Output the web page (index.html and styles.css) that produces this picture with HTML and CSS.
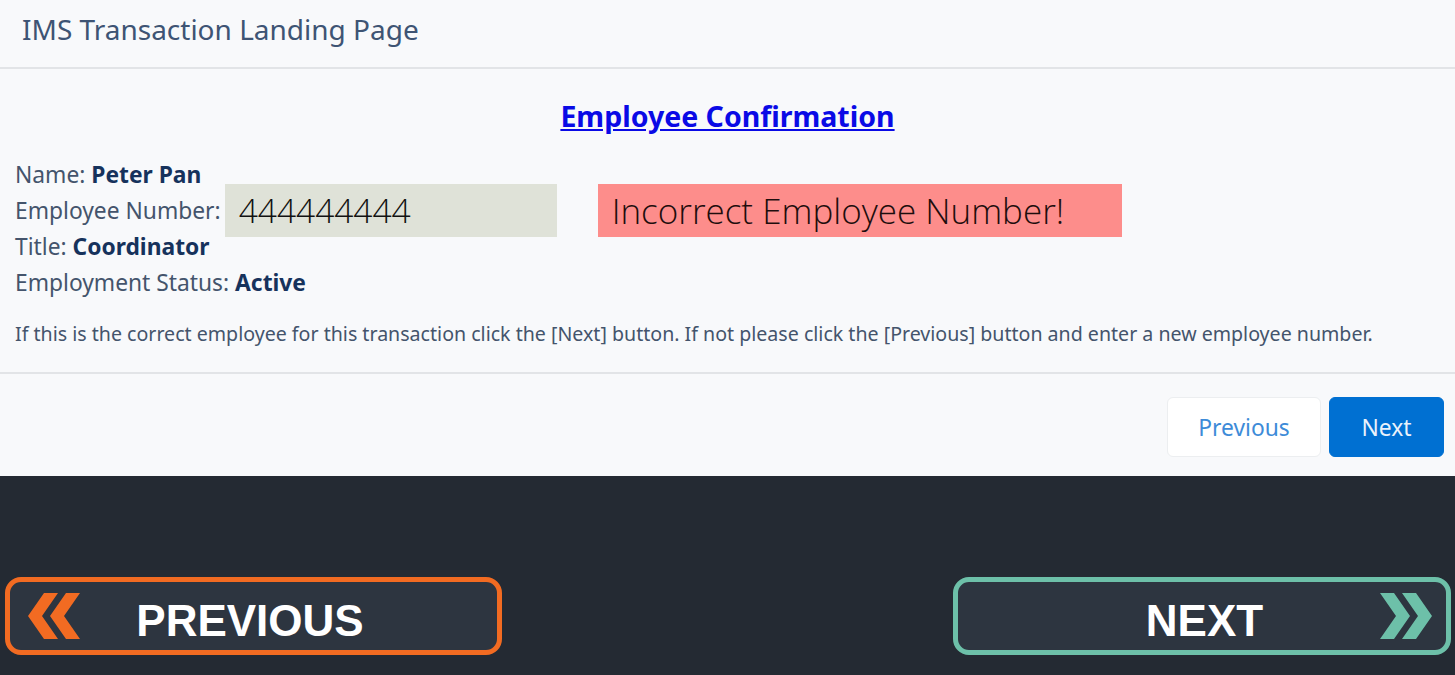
FILE: index.html
```html
<!DOCTYPE html>
<html lang="en">
<head>
    <meta charset="UTF-8">
    <title>IMS Transaction Landing Page</title>
    <link rel="stylesheet" href="styles.css">
</head>
<body>

    <div class="page">
        <div class="header">IMS Transaction Landing Page</div>

        <div class="content">
            <h2 class="title"><a href="#">Employee Confirmation</a></h2>

            <div class="row"><span>Name: <strong>Peter Pan</strong></span></div>
            <div class="row">
                <span>Employee Number:</span>
                <div class="emp-box">444444444</div>
                <div class="error-box">Incorrect Employee Number!</div>
            </div>
            <div class="row"><span>Title: <strong>Coordinator</strong></span></div>
            <div class="row"><span>Employment Status: <strong>Active</strong></span></div>

            <p class="hint">If this is the correct employee for this transaction click the [Next] button. If not please click the [Previous] button and enter a new employee number.</p>
        </div>

        <div class="footer">
            <button class="btn btn-neutral">Previous</button>
            <button class="btn btn-brand">Next</button>
        </div>
    </div>

    <div class="player">
        <button class="nav nav-prev">
            <svg class="chev" width="52" height="46" viewBox="0 0 52 46">
                <polygon points="30,0 16,0 0,23 16,46 30,46 14,23" />
                <polygon points="52,0 38,0 22,23 38,46 52,46 36,23" />
            </svg>
            <span class="nav-label">PREVIOUS</span>
            <span></span>
        </button>
        <button class="nav nav-next">
            <span></span>
            <span class="nav-label">NEXT</span>
            <svg class="chev" width="52" height="46" viewBox="0 0 52 46">
                <polygon points="0,0 14,0 30,23 14,46 0,46 16,23" />
                <polygon points="22,0 36,0 52,23 36,46 22,46 38,23" />
            </svg>
        </button>
    </div>

</body>
</html>
```

FILE: styles.css
```css
body {
    margin: 0;
    font-family: "Noto Sans", "Open Sans", sans-serif;
    background: #242a33;
}
.page {
    background: #f8f9fb;
}
.header {
    height: 67px;
    border-bottom: 2px solid #e2e4e7;
    padding-left: 22px;
    font-size: 28px;
    line-height: 58px;
    color: #3e5474;
}
.content {
    padding: 0 15px;
    border-bottom: 2px solid #e2e4e7;
    color: #44546c;
    font-size: 22.8px;
}
.title {
    margin: 0;
    padding-top: 28px;
    height: 59px;
    line-height: 38px;
    text-align: center;
    font-size: 28.5px;
}
.title a {
    color: #0a0ae6;
}
.row {
    display: flex;
    align-items: center;
    height: 36px;
    white-space: nowrap;
}
.row strong {
    color: #16325c;
}
.emp-box {
    width: 318px;
    height: 53px;
    margin-left: 4px;
    padding-left: 14px;
    background: #dfe2d8;
    color: #111;
    font-family: "Open Sans", sans-serif;
    font-weight: 300;
    font-size: 33.5px;
    line-height: 53px;
}
.error-box {
    width: 510px;
    height: 53px;
    margin-left: 41px;
    padding-left: 14px;
    background: #fd8d8b;
    color: #1e0d0d;
    font-family: "Open Sans", sans-serif;
    font-weight: 300;
    font-size: 35px;
    line-height: 53px;
}
.hint {
    margin: 0;
    padding: 20px 0 24px;
    font-size: 19.6px;
    line-height: 28px;
    white-space: nowrap;
    color: #44546c;
}
.footer {
    display: flex;
    justify-content: flex-end;
    gap: 8px;
    padding: 23px 11px 19px;
}
.btn {
    height: 60px;
    border-radius: 6px;
    font-family: "Noto Sans", sans-serif;
    font-size: 22.8px;
    cursor: pointer;
}
.btn-neutral {
    width: 154px;
    background: #fff;
    border: 1px solid #eceef0;
    color: #3d8bd8;
}
.btn-brand {
    width: 115px;
    background: #0070d2;
    border: 1px solid #0070d2;
    color: #eaf2fb;
}

/* course player nav */
.player {
    display: flex;
    justify-content: space-between;
    padding: 101px 4px 20px 5px;
}
.nav {
    display: grid;
    align-items: center;
    width: 497px;
    height: 78px;
    padding: 0;
    border: 5px solid;
    border-radius: 16px;
    background: #2d3540;
    font-family: "Liberation Sans", Arial, sans-serif;
    font-weight: bold;
    font-size: 44px;
    color: #fff;
    cursor: pointer;
}
.nav-prev {
    grid-template-columns: 52px 1fr 77px;
    border-color: #f26b22;
    padding-left: 18px;
}
.nav-prev .chev {
    fill: #f26b22;
}
.nav-next {
    grid-template-columns: 71px 1fr 52px;
    width: 498px;
    border-color: #6dc0a9;
    padding-right: 14px;
}
.nav-next .chev {
    fill: #6dc0a9;
}
.nav-label {
    text-align: center;
    padding-top: 10px;
}
```
